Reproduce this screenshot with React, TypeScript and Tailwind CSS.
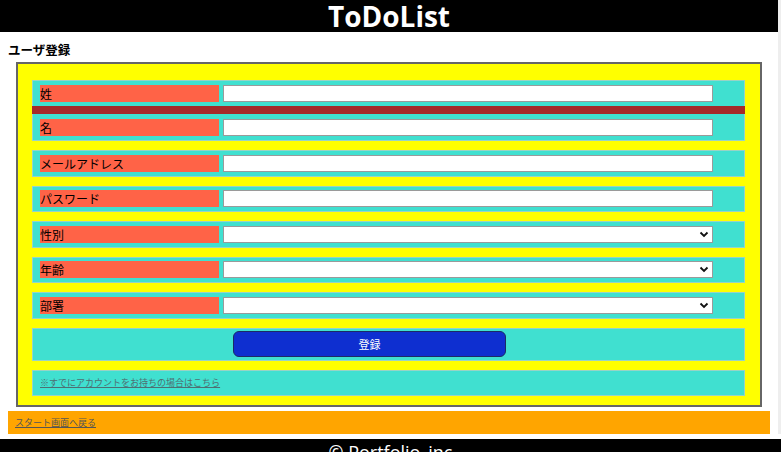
const jp = { fontFamily: '"Noto Sans CJK JP", "Liberation Sans", sans-serif' };

function Chevron() {
  return (
    <svg width="10" height="7" viewBox="0 0 10 7" className="mr-[3px]">
      <path d="M1.5 1.5 L5 5 L8.5 1.5" fill="none" stroke="#111" strokeWidth="1.8" />
    </svg>
  );
}

function Label({ text }: { text: string }) {
  return (
    <div className="w-[179px] h-[17px] shrink-0 bg-[#ff6347] text-[12px] leading-[17px] text-black">
      {text}
    </div>
  );
}

function TextRow({ label }: { label: string }) {
  return (
    <div className="bg-[#40e0d0] border border-[#98d4c6] h-[26.5px] flex items-center gap-[4px] pl-[7px]">
      <Label text={label} />
      <input className="w-[490px] h-[17px] bg-white border border-[#9a9a9a] outline-none" />
    </div>
  );
}

function SelectRow({ label }: { label: string }) {
  return (
    <div className="bg-[#40e0d0] border border-[#98d4c6] h-[26.5px] flex items-center gap-[4px] pl-[7px]">
      <Label text={label} />
      <div className="w-[490px] h-[17px] bg-white border border-[#9a9a9a] flex items-center justify-end">
        <Chevron />
      </div>
    </div>
  );
}

export default function App() {
  return (
    <div className="w-[781px] h-[452px] overflow-hidden bg-white" style={jp}>
      <div className="flex">
        <div className="w-[778px]">
          <header className="h-[32px] bg-black flex items-center justify-center overflow-hidden">
            <h1
              className="text-white text-[28px] font-bold leading-[30px]"
              style={{ fontFamily: '"Open Sans", "Noto Sans", sans-serif' }}
            >
              ToDoList
            </h1>
          </header>

          <p className="pl-2 pt-[9px] pb-[4px] text-[12.5px] leading-[17px] font-bold text-black">ユーザ登録</p>

          <div className="ml-4 w-[746px] border-2 border-[#666] bg-[#ffff00] pt-[16px] pl-[14px] pr-[15px] pb-[9px] flex flex-col gap-[9px]">
            <div className="bg-[#40e0d0] border border-[#98d4c6] h-[61px]">
              <div className="flex items-center gap-[4px] pl-[7px] pt-[4px] pb-[4px]">
                <Label text="姓" />
                <input className="w-[490px] h-[17px] bg-white border border-[#9a9a9a] outline-none" />
              </div>
              <div className="h-[8px] bg-[#a52a2a] -mx-px" />
              <div className="flex items-center gap-[4px] pl-[7px] pt-[5px] pb-[4px]">
                <Label text="名" />
                <input className="w-[490px] h-[17px] bg-white border border-[#9a9a9a] outline-none" />
              </div>
            </div>

            <TextRow label="メールアドレス" />
            <TextRow label="パスワード" />
            <SelectRow label="性別" />
            <SelectRow label="年齢" />
            <SelectRow label="部署" />

            <div className="bg-[#40e0d0] border border-[#98d4c6] h-[33px] flex items-center pl-[200px]">
              <button className="w-[273px] h-[26px] rounded-[6px] bg-[#0e2fd0] border border-[#1b2a66] text-white text-[11px] leading-none">
                登録
              </button>
            </div>

            <div className="bg-[#40e0d0] border border-[#98d4c6] h-[26.5px] flex items-center pl-[7px]">
              <a className="text-[9px] leading-none text-[#4f6f72] underline">※すでにアカウントをお持ちの場合はこちら</a>
            </div>
          </div>

          <div className="ml-2 mt-[4px] w-[762px] h-[23px] bg-[#ffa500] flex items-center pl-[7px]">
            <a className="text-[9px] leading-none text-[#555] underline">スタート画面へ戻る</a>
          </div>
        </div>
        <div className="w-[3px] bg-[#eeeeee]" />
      </div>

      <footer className="mt-[5px] h-[40px] bg-black text-center">
        <p
          className="text-white text-[18px] leading-[26px]"
          style={{ fontFamily: '"Open Sans", "Noto Sans", sans-serif' }}
        >
          © Portfolio_inc
        </p>
      </footer>
    </div>
  );
}
